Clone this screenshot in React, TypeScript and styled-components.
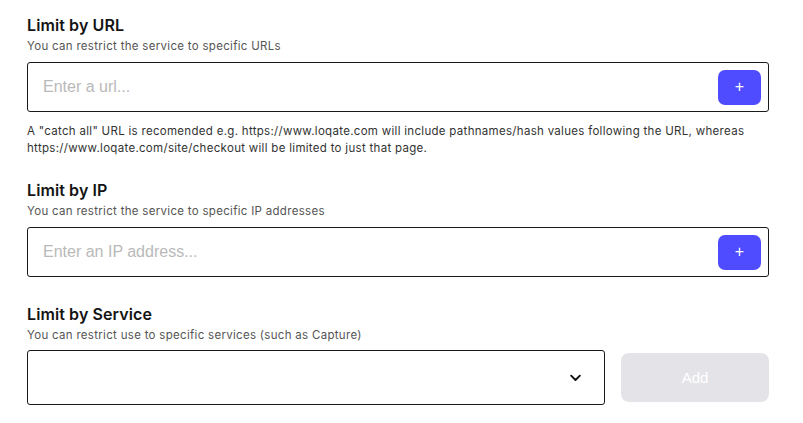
import React from "react";
import styled, { createGlobalStyle } from "styled-components";

const Global = createGlobalStyle`
  html, body { margin: 0; padding: 0; background: #fff; }
  body { font-family: Inter, "Noto Sans", sans-serif; color: #111; }
  * { box-sizing: border-box; }
`;

const Page = styled.div`
  padding: 14px 34px 0 27px;
  display: flex;
  flex-direction: column;
`;

const Section = styled.section<{ $gap?: number }>`
  display: flex;
  flex-direction: column;
  margin-top: ${(p) => p.$gap ?? 0}px;
`;

const Title = styled.h2`
  margin: 0;
  font-size: 16px;
  font-weight: 600;
  line-height: 22px;
  letter-spacing: 0.1px;
  color: #141414;
`;

const Sub = styled.p`
  margin: 2px 0 0;
  font-size: 11.5px;
  line-height: 16px;
  letter-spacing: 0.3px;
  color: #555;
`;

const Field = styled.div`
  margin-top: 8px;
  height: 50px;
  border: 1px solid #1a1a1a;
  border-radius: 3px;
  display: flex;
  align-items: center;
  padding: 0 7px 0 15px;
`;

const Input = styled.input`
  flex: 1;
  border: none;
  outline: none;
  background: transparent;
  font-family: "Liberation Sans", Arial, sans-serif;
  font-size: 16px;
  color: #222;
  padding: 0;
  &::placeholder { color: #b9b9b9; }
`;

const PlusButton = styled.button`
  width: 43px;
  height: 35px;
  border: none;
  border-radius: 7px;
  background: #4f4cff;
  color: #fff;
  font-size: 16px;
  font-family: "Liberation Sans", Arial, sans-serif;
  display: flex;
  align-items: center;
  justify-content: center;
  padding: 0;
`;

const Help = styled.p`
  margin: 11px 0 0;
  font-size: 11.5px;
  line-height: 17px;
  letter-spacing: 0.3px;
  color: #333;
`;

const Row = styled.div`
  margin-top: 7px;
  display: flex;
  align-items: center;
  gap: 16px;
`;

const Select = styled.div`
  width: 578px;
  height: 55px;
  border: 1px solid #1a1a1a;
  border-radius: 3px;
  display: flex;
  align-items: center;
  justify-content: flex-end;
  padding-right: 21px;
`;

const AddButton = styled.button`
  flex: 1;
  height: 49px;
  border: none;
  border-radius: 8px;
  background: #e4e4e8;
  color: #fff;
  font-family: "Liberation Sans", Arial, sans-serif;
  font-size: 15px;
`;

const Chevron = () => (
  <svg width="15" height="15" viewBox="0 0 24 24" fill="none" stroke="#111" strokeWidth="3" strokeLinecap="round" strokeLinejoin="round">
    <path d="M5 9l7 7 7-7" />
  </svg>
);

export default function App() {
  return (
    <>
      <Global />
      <Page>
        <Section>
          <Title>Limit by URL</Title>
          <Sub>You can restrict the service to specific URLs</Sub>
          <Field>
            <Input placeholder="Enter a url..." />
            <PlusButton>+</PlusButton>
          </Field>
          <Help>
            A "catch all" URL is recomended e.g. https://www.loqate.com will include pathnames/hash values following the URL, whereas
            <br />
            https://www.loqate.com/site/checkout will be limited to just that page.
          </Help>
        </Section>
        <Section $gap={22}>
          <Title>Limit by IP</Title>
          <Sub>You can restrict the service to specific IP addresses</Sub>
          <Field>
            <Input placeholder="Enter an IP address..." />
            <PlusButton>+</PlusButton>
          </Field>
        </Section>
        <Section $gap={26}>
          <Title>Limit by Service</Title>
          <Sub>You can restrict use to specific services (such as Capture)</Sub>
          <Row>
            <Select>
              <Chevron />
            </Select>
            <AddButton>Add</AddButton>
          </Row>
        </Section>
      </Page>
    </>
  );
}
